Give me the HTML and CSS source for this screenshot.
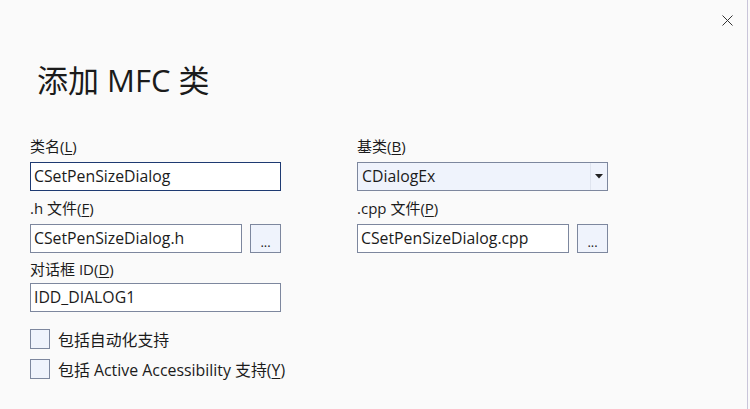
FILE: index.html
```
<!DOCTYPE html>
<html lang="zh">
<head>
<meta charset="utf-8">
<title>添加 MFC 类</title>
<link rel="stylesheet" href="styles.css">
</head>
<body>
<div class="dialog">
  <div class="topbar">
    <button class="close" aria-label="关闭">
      <svg width="11" height="11" viewBox="0 0 11 11"><path d="M0.5 0.5 L10.5 10.5 M10.5 0.5 L0.5 10.5" stroke="#333" stroke-width="1" fill="none"/></svg>
    </button>
  </div>
  <h1 class="title">添加 MFC 类</h1>
  <div class="form">
    <div class="col left">
      <label class="lbl">类名(<u>L</u>)</label>
      <div class="field focus">CSetPenSizeDialog</div>
      <label class="lbl l2">.h 文件(<u>F</u>)</label>
      <div class="row">
        <div class="field short">CSetPenSizeDialog.h</div>
        <button class="browse">...</button>
      </div>
      <label class="lbl l3">对话框 ID(<u>D</u>)</label>
      <div class="field">IDD_DIALOG1</div>
    </div>
    <div class="col right">
      <label class="lbl">基类(<u>B</u>)</label>
      <div class="select">
        <span class="sel-text">CDialogEx</span>
        <span class="sel-arrow"><svg width="8" height="5" viewBox="0 0 8 5"><path d="M0 0 H8 L4 4.5 Z" fill="#222"/></svg></span>
      </div>
      <label class="lbl l2">.cpp 文件(<u>P</u>)</label>
      <div class="row">
        <div class="field short">CSetPenSizeDialog.cpp</div>
        <button class="browse">...</button>
      </div>
    </div>
  </div>
  <div class="checks">
    <label class="check"><span class="box"></span><span class="ctext">包括自动化支持</span></label>
    <label class="check"><span class="box"></span><span class="ctext">包括 Active Accessibility 支持(<u>Y</u>)</span></label>
  </div>
</div>
</body>
</html>
```
FILE: styles.css
```
html, body {
  margin: 0;
  padding: 0;
  background: #fafafa;
}
body {
  width: 750px;
  height: 409px;
  overflow: hidden;
  font-family: "Open Sans", "Noto Sans CJK SC", sans-serif;
  color: #1b1b1b;
  font-size: 15px;
}
.dialog {
  width: 748px;
  height: 409px;
  border-right: 1px solid #c9c5da;
  box-sizing: border-box;
  padding-left: 30px;
}
.topbar {
  display: flex;
  justify-content: flex-end;
  height: 50px;
  padding-right: 14px;
}
.close {
  background: none;
  border: 0;
  padding: 0;
  margin-top: 15px;
  width: 11px;
  height: 11px;
  display: flex;
}
.title {
  margin: 10px 0 0 7px;
  font-weight: 400;
  font-size: 31px;
  line-height: 40px;
  height: 40px;
  letter-spacing: 0;
}
.form {
  display: flex;
  gap: 76px;
  margin-top: 36px;
}
.col {
  display: flex;
  flex-direction: column;
  width: 251px;
}
.lbl {
  display: block;
  height: 20px;
  line-height: 20px;
  margin-bottom: 6px;
  font-size: 15px;
}
.lbl u, .ctext u {
  text-decoration-thickness: 1px;
  text-underline-offset: 2px;
}
.l2 { margin-top: 7px; }
.l3 { margin-top: 6px; margin-bottom: 4px; }
.field {
  box-sizing: border-box;
  height: 29px;
  border: 1px solid #7d879e;
  background: #fff;
  padding: 0 3px;
  line-height: 27px;
  font-size: 15.8px;
  white-space: nowrap;
  overflow: hidden;
}
.field.focus {
  border-color: #1e3a72;
}
.row {
  display: flex;
  gap: 8px;
}
.field.short {
  width: 212px;
}
.browse {
  box-sizing: border-box;
  width: 31px;
  height: 29px;
  border: 1px solid #7d879e;
  background: #eff3fc;
  font-family: "Open Sans", sans-serif;
  font-size: 13px;
  color: #222;
  padding: 0 0 3px;
  line-height: 1;
  display: flex;
  align-items: flex-end;
  justify-content: center;
}
.select {
  box-sizing: border-box;
  height: 29px;
  border: 1px solid #7d879e;
  background: #eff3fc;
  display: flex;
  align-items: center;
}
.sel-text {
  flex: 1;
  padding-left: 4px;
  font-size: 15.8px;
  line-height: 27px;
}
.sel-arrow {
  width: 16px;
  height: 27px;
  border-left: 1px solid #dfe4ef;
  display: flex;
  align-items: center;
  justify-content: center;
}
.checks {
  display: flex;
  flex-direction: column;
  gap: 10px;
  margin-top: 17px;
}
.check {
  display: flex;
  align-items: center;
  gap: 8px;
  height: 20px;
  font-size: 15.9px;
}
.box {
  box-sizing: border-box;
  width: 20px;
  height: 20px;
  border: 1px solid #7d879e;
  background: #eff3fc;
}
```
